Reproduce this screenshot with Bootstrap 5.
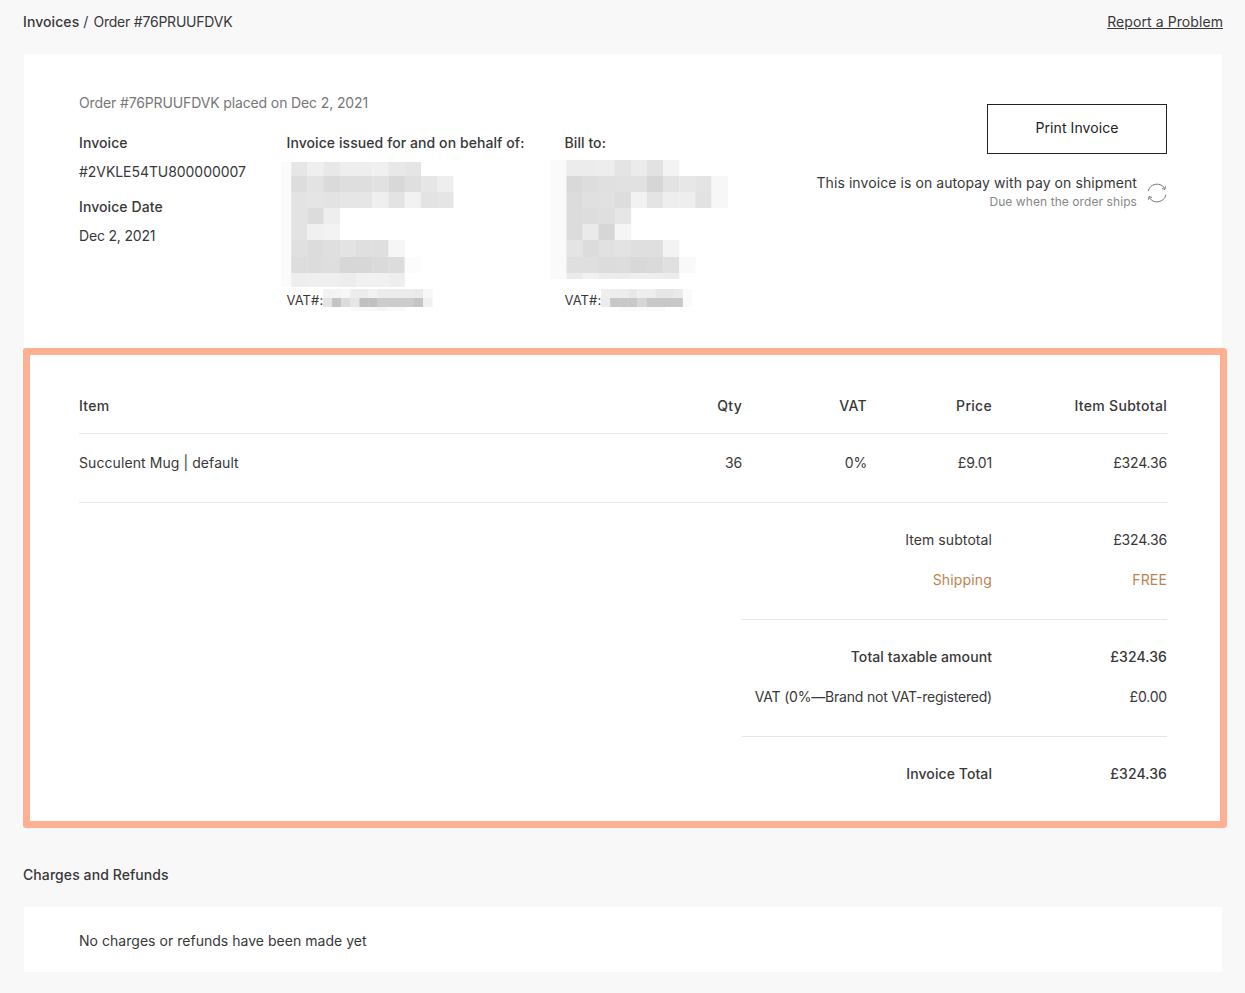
<!DOCTYPE html>
<html lang="en">
<head>
    <meta charset="UTF-8">
    <meta name="viewport" content="width=device-width, initial-scale=1.0">
    <title>Invoice</title>
    <link href="https://cdn.jsdelivr.net/npm/bootstrap@5.3.0/dist/css/bootstrap.min.css" rel="stylesheet">
    <style>
        body { background: #f8f8f8; color: #383838; font-family: Inter, "Liberation Sans", sans-serif; font-size: 14px; line-height: 20px; letter-spacing: .08px; }
        .page-wrap { padding: 12px 22px 21px 23px; }
        .crumbs { height: 42px; }
        .crumbs a { color: #383838; }
        .order-no { letter-spacing: -.22px; margin-left: 1px; }
        .inv-panel { background: #fff; margin: 0 1px; padding: 0 55px; }
        .inv-head { height: 294px; padding-top: 39px; }
        .col-a { width: 207.5px; }
        .col-b { width: 278px; }
        .lbl { font-weight: 500; }
        .order-line { color: #777; letter-spacing: -.13px; margin-bottom: 20px; }
        .gap-9 { margin-top: 9px; }
        .gap-15 { margin-top: 15px; }
        .num { letter-spacing: -.18px; }
        .inv-no { letter-spacing: -.06px; }
        .print-btn { width: 180px; height: 50px; margin-top: 11px; padding: 0 0 3px; border: 1px solid #222; border-radius: 0; color: #222; font-size: 14px; letter-spacing: .08px; }
        .autopay { margin-top: 19px; gap: 10px; }
        .autopay svg { margin-top: 2px; }
        .tiny { font-size: 12px; line-height: 16px; padding-top: 1px; color: #888; letter-spacing: .08px; }
        .mosaic { display: block; margin: 5px 0 2px -6px; }
        .mosaic-wide { margin-left: -15px; }
        .vat-line { font-size: 13px; height: 20px; }
        .vat-line svg { flex: none; margin-top: -1px; }
        .table-zone { position: relative; }
        .table-body { padding-top: 48px; padding-bottom: 34px; }
        .grid-row { display: grid; grid-template-columns: 1fr 100px 125px 125px 175px; border-bottom: 1px solid #e6e6e6; }
        .grid-row > div:not(:first-child) { text-align: right; }
        .head-row { padding-bottom: 17px; letter-spacing: .3px; }
        .item-row { padding: 19px 0 29px; }
        .sum-box { width: 425px; margin-left: auto; }
        .sum-row { display: grid; grid-template-columns: 1fr 175px; height: 40px; align-items: center; }
        .sum-row > div { text-align: right; }
        .sum-group { padding: 17px 0 19px; border-bottom: 1px solid #e6e6e6; }
        .sum-last { padding-top: 17px; }
        .ship { color: #bb8450; letter-spacing: .16px; }
        .vat-note { letter-spacing: -.2px; }
        .hilite { position: absolute; left: 0; right: -4px; top: 0; bottom: 0; border: 7px solid #ffb093; border-radius: 3px; pointer-events: none; }
        .charges-title { margin-top: 37px; height: 42px; }
        .charges-card { height: 65px; padding-top: 2px; letter-spacing: .03px; }
    </style>
</head>
<body>
    <div class="page-wrap">
        <div class="crumbs d-flex justify-content-between">
            <div><span class="lbl">Invoices</span> / <span class="order-no">Order #76PRUUFDVK</span></div>
            <a href="#">Report a Problem</a>
        </div>

        <div class="inv-panel inv-head d-flex justify-content-between">
            <div>
                <div class="order-line">Order #76PRUUFDVK placed on Dec 2, 2021</div>
                <div class="d-flex">
                    <div class="col-a">
                        <div class="lbl">Invoice</div>
                        <div class="gap-9 inv-no">#2VKLE54TU800000007</div>
                        <div class="lbl gap-15">Invoice Date</div>
                        <div class="gap-9 num">Dec 2, 2021</div>
                    </div>
                    <div class="col-b">
                        <div class="lbl">Invoice issued for and on behalf of:</div>
                        <svg class="mosaic" id="blurIssuer" width="190" height="130" aria-hidden="true"></svg>
                        <div class="d-flex vat-line">VAT#:<svg id="vatIssuer" width="112" height="24" aria-hidden="true"></svg></div>
                    </div>
                    <div>
                        <div class="lbl">Bill to:</div>
                        <svg class="mosaic mosaic-wide" id="blurBill" width="190" height="130" aria-hidden="true"></svg>
                        <div class="d-flex vat-line">VAT#:<svg id="vatBill" width="100" height="24" aria-hidden="true"></svg></div>
                    </div>
                </div>
            </div>
            <div class="d-flex flex-column align-items-end">
                <button class="btn print-btn" type="button">Print Invoice</button>
                <div class="d-flex align-items-center autopay">
                    <div class="text-end">
                        <div>This invoice is on autopay with pay on shipment</div>
                        <div class="tiny">Due when the order ships</div>
                    </div>
                    <svg width="20" height="20" viewBox="0 0 20 20" fill="none" stroke="#777" stroke-width="1">
                        <path d="M1.2 8.2A9 9 0 0 1 17.6 5.4"/>
                        <path d="M18.8 11.8A9 9 0 0 1 2.4 14.6"/>
                        <path d="M18.4 3.2 18 6.4l-3-.9" />
                        <path d="M1.6 16.8 2 13.6l3 .9" />
                    </svg>
                </div>
            </div>
        </div>

        <div class="table-zone">
            <div class="inv-panel table-body">
                <div class="grid-row head-row lbl">
                    <div>Item</div><div>Qty</div><div>VAT</div><div>Price</div><div>Item Subtotal</div>
                </div>
                <div class="grid-row item-row">
                    <div>Succulent Mug | default</div><div class="num">36</div><div class="num">0%</div><div class="num">£9.01</div><div class="num">£324.36</div>
                </div>
                <div class="sum-box">
                    <div class="sum-group">
                        <div class="sum-row"><div>Item subtotal</div><div class="num">£324.36</div></div>
                        <div class="sum-row ship"><div>Shipping</div><div>FREE</div></div>
                    </div>
                    <div class="sum-group">
                        <div class="sum-row lbl"><div>Total taxable amount</div><div>£324.36</div></div>
                        <div class="sum-row"><div class="vat-note">VAT (0%—Brand not VAT-registered)</div><div class="num">£0.00</div></div>
                    </div>
                    <div class="sum-last">
                        <div class="sum-row lbl"><div>Invoice Total</div><div>£324.36</div></div>
                    </div>
                </div>
            </div>
            <div class="hilite"></div>
        </div>

        <div class="charges-title lbl">Charges and Refunds</div>
        <div class="inv-panel charges-card d-flex align-items-center">No charges or refunds have been made yet</div>
    </div>

    <script>
        // pixelated address blocks: [top, height, first cell index, greys...]
        function drawBlur(id, originX, cellW, rows) {
            const svg = document.getElementById(id);
            rows.forEach(row => {
                const [top, h, start, ...greys] = row;
                greys.forEach((g, i) => {
                    const r = document.createElementNS('http://www.w3.org/2000/svg', 'rect');
                    r.setAttribute('x', originX + (start + i) * cellW);
                    r.setAttribute('y', top);
                    r.setAttribute('width', cellW + 0.3);
                    r.setAttribute('height', h);
                    r.setAttribute('fill', '#' + g + g + g);
                    svg.appendChild(r);
                });
            });
        }

        drawBlur('blurIssuer', 10.2, 16.2, [
            [4, 125, -1, 'fb'],
            [4, 14, 0, 'e6', 'ef', 'e8', 'ee', 'ee', 'f0', 'e8', 'e5'],
            [18, 16, 0, 'dd', 'e3', 'da', 'de', 'de', 'e1', 'd8', 'df', 'e6', 'ee'],
            [34, 16, 0, 'e3', 'e5', 'e3', 'e6', 'e6', 'ef', 'e3', 'f2', 'e3', 'e5'],
            [50, 16, 0, 'e3', 'dc', 'ee'],
            [66, 16, 0, 'e3', 'f0', 'f3'],
            [82, 17, 0, 'e0', 'dc', 'df', 'e3', 'df', 'df', 'f6'],
            [99, 16, 0, 'dd', 'dc', 'de', 'd7', 'd7', 'da', 'dc', 'fc'],
            [115, 14, 0, 'ee', 'ef', 'ef', 'ed', 'f1', 'f1', 'ee']
        ]);
        drawBlur('blurBill', 16.5, 16.1, [
            [2, 119, -1, 'fa'],
            [2, 16, 0, 'ec', 'ec', 'ed', 'e4', 'eb', 'e2', 'f3'],
            [18, 16, 0, 'd9', 'dd', 'e0', 'e1', 'e1', 'd6', 'e3', 'e7', 'e4', 'f7'],
            [34, 16, 0, 'dc', 'e0', 'e1', 'dd', 'f2', 'e4', 'ee', 'ee', 'e2', 'f7'],
            [50, 16, 0, 'dc', 'dd', 'df', 'e6'],
            [66, 16, 0, 'dc', 'ea', 'd6', 'f5'],
            [82, 17, 0, 'e4', 'dc', 'e1', 'e3', 'df', 'df', 'f3'],
            [99, 16, 0, 'df', 'df', 'dc', 'dd', 'd8', 'da', 'e0', 'f9'],
            [115, 6, 0, 'ea', 'f1', 'ec', 'ec', 'ef', 'ee', 'ec']
        ]);
        drawBlur('vatIssuer', 0, 9.1, [
            [0, 9, 0, 'f2', 'f4', 'f7', 'ec', 'ec', 'f2', 'ec', 'ec', 'ec', 'ec', 'ea', 'f7'],
            [9, 9, 0, 'e4', 'c4', 'dc', 'e6', 'c0', 'c0', 'cc', 'cc', 'cc', 'cc', 'c4', 'f0'],
            [18, 4, 3, 'f9', 'f9', 'f9', 'f5', 'f9', 'f9']
        ]);
        drawBlur('vatBill', 0, 9.1, [
            [0, 9, 0, 'ef', 'ed', 'ed', 'e8', 'ee', 'ee', 'e6', 'e6', 'ea', 'fa'],
            [9, 9, 0, 'ec', 'c8', 'c8', 'c8', 'd6', 'c8', 'c8', 'c8', 'c8', 'fa'],
            [18, 4, 2, 'fa', 'fa', 'fa', 'fa', 'fa']
        ]);
    </script>
</body>
</html>
